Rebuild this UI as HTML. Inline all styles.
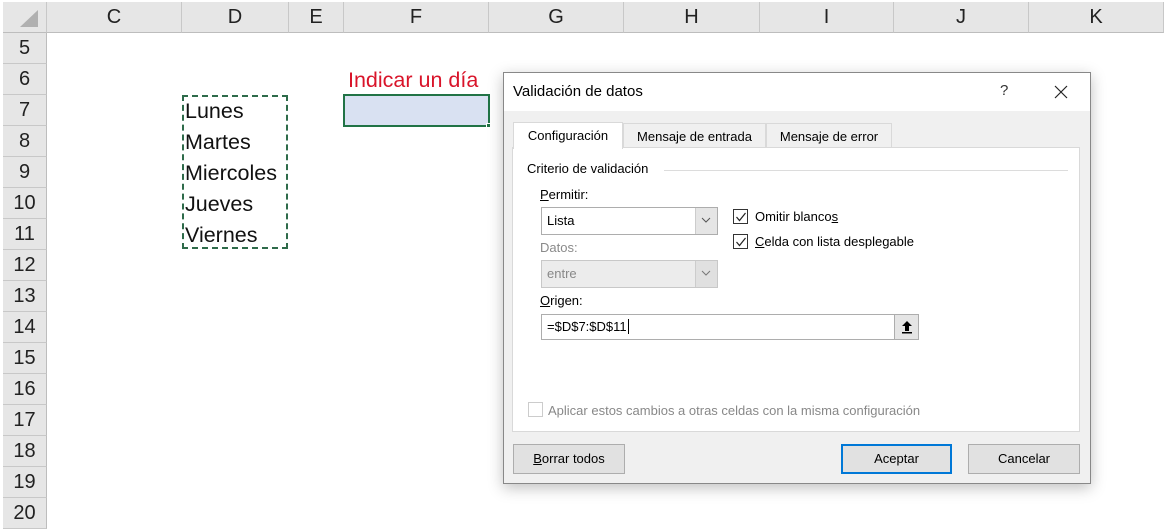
<!DOCTYPE html>
<html><head><meta charset="utf-8"><style>
*{margin:0;padding:0;box-sizing:border-box}
body{width:1164px;height:530px;overflow:hidden;background:#fff;position:relative;font-family:"Liberation Sans",sans-serif}
.a{position:absolute}
.ch{position:absolute;top:2px;height:31px;background:#e6e6e6;border-right:1px solid #c8c8c8;border-bottom:1px solid #bdbdbd;font-size:20px;color:#222;text-align:center;line-height:31px}
.rh{position:absolute;left:3px;width:44px;height:31px;background:#e6e6e6;border-bottom:1px solid #c8c8c8;border-right:1px solid #bdbdbd;font-size:20px;color:#222;text-align:center;line-height:31px}
.d{font-size:21.5px;color:#111;position:absolute;left:185px}
.dlg{font-size:13px;color:#000}
.btn{position:absolute;height:30px;background:#e1e1e1;border:1px solid #adadad;text-align:center;line-height:28px;font-size:13px}
.cb{position:absolute;width:15px;height:15px;border:1px solid #333;background:#fff}
.u{text-decoration:underline}
</style></head><body>
<div class="ch" style="left:3px;width:44px"></div>
<div class="a" style="left:20px;top:10px;width:0;height:0;border-left:18px solid transparent;border-bottom:17px solid #b0b0b0"></div>
<div class="ch" style="left:47px;width:135px">C</div>
<div class="ch" style="left:182px;width:107px">D</div>
<div class="ch" style="left:289px;width:55px">E</div>
<div class="ch" style="left:344px;width:145px">F</div>
<div class="ch" style="left:489px;width:135px">G</div>
<div class="ch" style="left:624px;width:136px">H</div>
<div class="ch" style="left:760px;width:134px">I</div>
<div class="ch" style="left:894px;width:135px">J</div>
<div class="ch" style="left:1029px;width:135px">K</div>
<div class="rh" style="top:33px">5</div>
<div class="rh" style="top:64px">6</div>
<div class="rh" style="top:95px">7</div>
<div class="rh" style="top:126px">8</div>
<div class="rh" style="top:157px">9</div>
<div class="rh" style="top:188px">10</div>
<div class="rh" style="top:219px">11</div>
<div class="rh" style="top:250px">12</div>
<div class="rh" style="top:281px">13</div>
<div class="rh" style="top:312px">14</div>
<div class="rh" style="top:343px">15</div>
<div class="rh" style="top:374px">16</div>
<div class="rh" style="top:405px">17</div>
<div class="rh" style="top:436px">18</div>
<div class="rh" style="top:467px">19</div>
<div class="rh" style="top:498px">20</div>

<div class="a" style="left:182px;top:95px;width:106px;height:154px;border:2px dashed #2e6b4a"></div>
<div class="d" style="top:99px">Lunes</div>
<div class="d" style="top:130px">Martes</div>
<div class="d" style="top:161px">Miercoles</div>
<div class="d" style="top:192px">Jueves</div>
<div class="d" style="top:223px">Viernes</div>
<div class="a" style="left:348px;top:68px;font-size:21.5px;color:#d9142a">Indicar un día</div>
<div class="a" style="left:343px;top:94px;width:147px;height:33px;border:2px solid #217346;background:#d9e1f2"></div>
<div class="a" style="left:486px;top:123px;width:5px;height:5px;background:#217346;border:1px solid #fff"></div>

<div class="a dlg" style="left:503px;top:72px;width:588px;height:412px;background:#f0f0f0;border:1px solid #888;box-shadow:0 4px 14px rgba(0,0,0,.25)">
 <div class="a" style="left:0;top:0;width:586px;height:38px;background:#fff"></div>
 <div class="a" style="left:9px;top:10px;font-size:15px">Validación de datos</div>
 <div class="a" style="left:496px;top:9px;font-size:15px;color:#333">?</div>
 <svg class="a" style="left:550px;top:12px" width="14" height="14"><path d="M1 1L13 13M13 1L1 13" stroke="#222" stroke-width="1.2"/></svg>
 <div class="a" style="left:8px;top:74px;width:568px;height:285px;background:#fff;border:1px solid #d9d9d9"></div>
 <div class="a" style="left:9px;top:49px;width:110px;height:27px;background:#fff;border:1px solid #d9d9d9;border-bottom:none;text-align:center;line-height:26px">Configuración</div>
 <div class="a" style="left:119px;top:50px;width:143px;height:25px;background:#f0f0f0;border:1px solid #d9d9d9;text-align:center;line-height:25px">Mensaje de entrada</div>
 <div class="a" style="left:262px;top:50px;width:126px;height:25px;background:#f0f0f0;border:1px solid #d9d9d9;text-align:center;line-height:25px">Mensaje de error</div>
 <div class="a" style="left:23px;top:88px">Criterio de validación</div>
 <div class="a" style="left:160px;top:97px;width:404px;height:1px;background:#dcdcdc"></div>
 <div class="a" style="left:36px;top:114px"><span class="u">P</span>ermitir:</div>
 <div class="a" style="left:37px;top:134px;width:177px;height:28px;border:1px solid #adadad;background:#fff;line-height:26px;padding-left:5px">Lista</div>
 <div class="a" style="left:191px;top:135px;width:22px;height:26px;background:#e5e5e5;border-left:1px solid #ccc"></div>
 <svg class="a" style="left:197px;top:144px" width="10" height="6"><path d="M1 1L5 5L9 1" stroke="#555" fill="none"/></svg>
 <div class="a" style="left:36px;top:167px;color:#8a8a8a">Datos:</div>
 <div class="a" style="left:37px;top:187px;width:177px;height:28px;border:1px solid #c8c8c8;background:#ececec;line-height:26px;padding-left:5px;color:#888">entre</div>
 <div class="a" style="left:191px;top:188px;width:22px;height:26px;background:#e0e0e0;border-left:1px solid #ccc"></div>
 <svg class="a" style="left:197px;top:197px" width="10" height="6"><path d="M1 1L5 5L9 1" stroke="#777" fill="none"/></svg>
 <div class="cb" style="left:229px;top:136px"></div>
 <svg class="a" style="left:231px;top:138px" width="12" height="12"><path d="M1.5 6L4.5 9.5L10.5 2" stroke="#222" fill="none" stroke-width="1.2"/></svg>
 <div class="a" style="left:251px;top:136px">Omitir blanco<span class="u">s</span></div>
 <div class="cb" style="left:229px;top:161px"></div>
 <svg class="a" style="left:231px;top:163px" width="12" height="12"><path d="M1.5 6L4.5 9.5L10.5 2" stroke="#222" fill="none" stroke-width="1.2"/></svg>
 <div class="a" style="left:251px;top:161px"><span class="u">C</span>elda con lista desplegable</div>
 <div class="a" style="left:36px;top:220px"><span class="u">O</span>rigen:</div>
 <div class="a" style="left:37px;top:241px;width:378px;height:26px;border:1px solid #adadad;background:#fff;line-height:24px;padding-left:5px">=$D$7:$D$11<span style="border-left:1px solid #000;margin-left:1px"></span></div>
 <div class="a" style="left:390px;top:242px;width:24px;height:24px;background:#e5e5e5;border-left:1px solid #adadad;text-align:center;font-weight:bold;line-height:22px;font-size:14px">
  <svg width="12" height="14" style="margin-top:5px"><path d="M6 1L1 6H4V11H8V6H11Z" fill="#000"/><rect x="1" y="12" width="10" height="1.5" fill="#000"/></svg></div>
 <div class="a" style="left:24px;top:329px;width:15px;height:15px;border:1px solid #ccc;background:#fff"></div>
 <div class="a" style="left:44px;top:330px;color:#888">Aplicar estos cambios a otras celdas con la misma configuración</div>
 <div class="btn" style="left:9px;top:371px;width:112px"><span class="u">B</span>orrar todos</div>
 <div class="btn" style="left:337px;top:371px;width:111px;border:2px solid #0078d7;line-height:26px">Aceptar</div>
 <div class="btn" style="left:464px;top:371px;width:112px">Cancelar</div>
</div>
</body></html>
